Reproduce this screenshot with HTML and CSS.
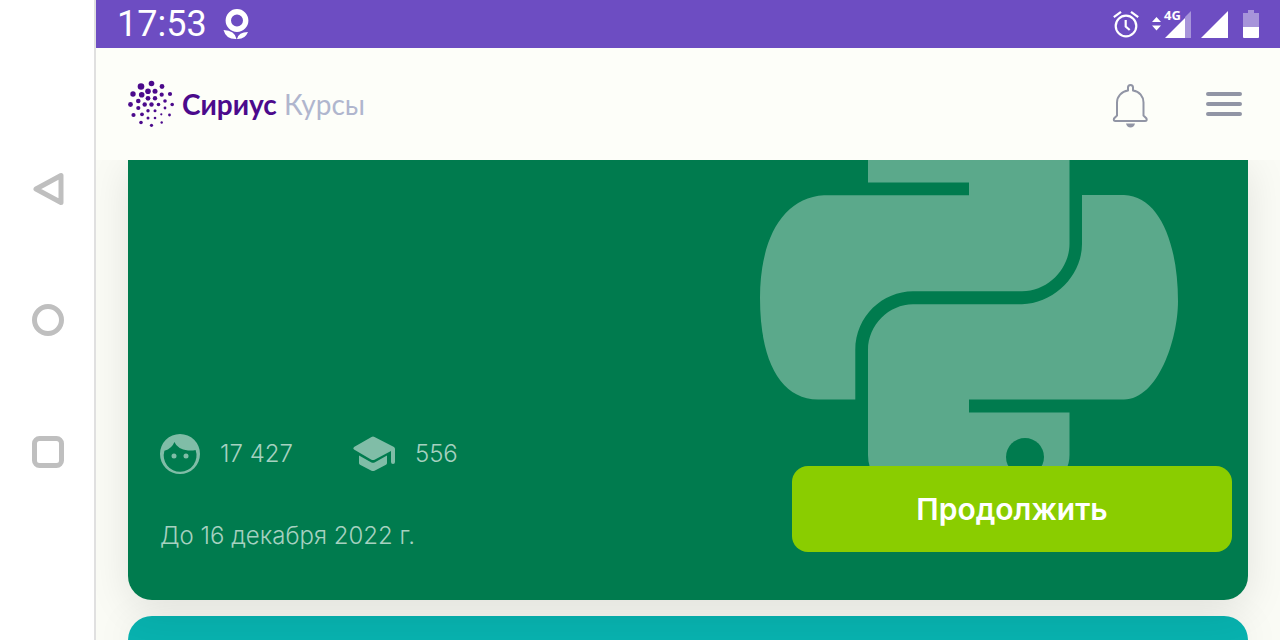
FILE: index.html
```html
<!DOCTYPE html>
<html lang="ru">
<head>
    <meta charset="UTF-8">
    <meta name="viewport" content="width=device-width, initial-scale=1.0">
    <title>Сириус Курсы</title>
    <link rel="stylesheet" href="styles.css">
</head>
<body>
    <!-- системная навигация -->
    <nav class="system-nav">
        <button type="button" aria-label="Назад">
            <svg width="32" height="32" viewBox="0 -1 32 32"><path d="M29 2.500v27L4 16Z" stroke-linejoin="round"/></svg>
        </button>
        <button type="button" aria-label="Домой">
            <svg width="32" height="32" viewBox="0 0 32 32"><circle cx="16" cy="16" r="13.5"/></svg>
        </button>
        <button type="button" aria-label="Недавние">
            <svg width="32" height="32" viewBox="0 0 32 32"><rect x="2.5" y="2.5" width="27" height="27" rx="5"/></svg>
        </button>
    </nav>

    <div class="screen">
        <div class="status-bar">
            <div class="status-left">
                <span class="clock">17:53</span>
                <svg width="26" height="32" viewBox="0 0 26 32">
                    <circle cx="14" cy="12.5" r="8.7" fill="none" stroke="#fff" stroke-width="5.4"/>
                    <path d="M.5 22Q12 22.5 13.5 31Q3 31.5 .5 22ZM25 24Q15.5 24 14 31Q22 31.5 25 24Z" fill="#fff"/>
                </svg>
            </div>
            <div class="status-right">
                <svg width="28" height="28" viewBox="0 0 28 28" fill="none" stroke="#fff" stroke-width="2.2">
                    <circle cx="13" cy="16" r="10.3"/>
                    <path d="M12.7 10v6.5l4 3.5M.8 7.2 8 1.8M25.2 7.2 18 1.8"/>
                </svg>
                <svg class="mobile" width="40" height="30" viewBox="0 0 40 30" fill="#fff">
                    <path d="M1 13 5.500 8 10 13ZM1 16.500l4.500 5L10 16.500Z"/>
                    <path d="M40 2v27H34V8Z" opacity=".4"/>
                    <path d="M34 9V29H14Z"/>
                    <text x="13" y="11">4G</text>
                </svg>
                <svg class="signal" width="27" height="28" viewBox="0 0 27 28"><path d="M27 1v27H0Z" fill="#fff"/></svg>
                <svg width="16" height="28" viewBox="0 0 16 28" fill="#fff">
                    <path d="M0 3h5V0h6v3h5V17H0Z" opacity=".4"/>
                    <path d="M0 17h16v10q0 1-1 1H1q-1 0-1-1Z"/>
                </svg>
            </div>
        </div>

        <header class="header">
            <a href="#" class="logo">
                <svg width="46" height="48" viewBox="0 0 46 48" fill="#4b0a8c">
                    <circle cx="23.5" cy="3.5" r="2.8"/><circle cx="13" cy="6.5" r="3.3"/><circle cx="34" cy="6.5" r="2.4"/>
                    <circle cx="5" cy="14" r="2.7"/><circle cx="20" cy="11.3" r="2.8"/><circle cx="27" cy="11.3" r="2.5"/>
                    <circle cx="13.7" cy="14.7" r="2.8"/><circle cx="33.7" cy="14.7" r="2.1"/><circle cx="42" cy="14" r="2.1"/>
                    <circle cx="20" cy="18.3" r="2.4"/><circle cx="27" cy="18.3" r="2.2"/><circle cx="10.3" cy="21" r="2.3"/>
                    <circle cx="37" cy="21" r="1.8"/><circle cx="2.5" cy="24.5" r="2.4"/><circle cx="16.7" cy="24.5" r="2.2"/>
                    <circle cx="23.5" cy="24.5" r="2.2"/><circle cx="30.5" cy="24.5" r="1.8"/><circle cx="44.2" cy="24.5" r="1.8"/>
                    <circle cx="10.3" cy="28" r="2.1"/><circle cx="37" cy="28" r="1.4"/><circle cx="20" cy="30.7" r="1.7"/>
                    <circle cx="27" cy="30.7" r="1.5"/><circle cx="5.5" cy="35" r="2.1"/><circle cx="14" cy="34.3" r="1.9"/>
                    <circle cx="33.3" cy="34.3" r="1.1"/><circle cx="41.5" cy="35" r="1.4"/><circle cx="20" cy="38" r="1.5"/>
                    <circle cx="27" cy="38" r="1.3"/><circle cx="13" cy="42.5" r="1.8"/><circle cx="33.7" cy="42.5" r="1.2"/>
                    <circle cx="23.5" cy="45.3" r="1.6"/>
                </svg>
                <span class="logo-text"><b>Сириус</b> Курсы</span>
            </a>
            <div class="header-actions">
                <button type="button" aria-label="Уведомления">
                    <svg width="36" height="44" viewBox="0 -1 36 44" fill="none" stroke="#9195a5" stroke-width="2" stroke-linejoin="round">
                        <path d="M16 7.5V4.5q0-2.500 2.500-2.500t2.500 2.500v3C27.500 8.500 31.500 13.500 31.500 19.500V32.500L34.500 35.500q.8 2.500-1.500 2.500H3.500q-2.300 0-1.500-2.500L5 32.500V19.5C5 13.500 9.500 8.500 16 7.5Z"/>
                        <path d="M14 40.500h9q-1 4-4.500 4t-4.500-4Z" fill="#9195a5" stroke="none"/>
                    </svg>
                </button>
                <button type="button" aria-label="Меню">
                    <svg width="36" height="24" viewBox="0 0 36 24" stroke="#9195a5" stroke-width="4" stroke-linecap="round">
                        <path d="M2 2h32M2 12h32M2 22h32"/>
                    </svg>
                </button>
            </div>
        </header>

        <main class="courses">
            <article class="card card-python">
                <svg class="card-image" width="418" height="346" viewBox="0 0 418 346" fill="#5ba98b">
                    <path d="M108 0V22.5H209V35.3H64C22 38 0 80 0 138C0 200 20 239 58 239.5H95.3V190C95.3 156 123 131.3 153 131.3H262C289 131 309.5 108 309.5 84V0Z"/>
                    <path d="M322 35H364C400 36 418 85 418 141C418 180 398 239 364 239.5H209V252.5H309.5V295C309.5 326 270 345 209 345C148 345 108 330 108 295V190C108 165 129 144.3 153 144.3H262C295 143 322 115 322 84Z"/>
                    <circle cx="265" cy="297" r="19" fill="#007b4e"/>
                </svg>
                <div class="card-info">
                    <div class="stats">
                        <span class="stat">
                            <svg width="40" height="40" viewBox="2 2 20 20" fill="#80bda7">
                                <path fill-rule="evenodd" d="M12 2a10 10 0 1 0 0 20a10 10 0 1 0 0-20ZM9.2 6Q10.7 9.6 16 10.2Q18 10.4 19.8 10A8.2 8.2 0 1 1 4.2 10.4Q8 9.3 9.2 6Z"/>
                                <circle cx="9" cy="13" r="1.25"/><circle cx="15" cy="13" r="1.25"/>
                            </svg>
                            17 427
                        </span>
                        <span class="stat">
                            <svg width="42" height="36" viewBox="0 0 42 36" fill="#80bda7">
                                <path d="M18.5 1Q20 0 21.5 1L41 11Q42 12 42 13V26q0 2-2 2t-2-2V15L22 23.5Q20 24.5 18 23.5L1 13.5Q-.5 12.5 1 11Z"/>
                                <path d="M6 19.5 18 26.2Q20 27.2 22 26.2L34 19.5V27Q34 28 33 28.7L22 34.5Q20 35.5 18 34.5L7 28.7Q6 28 6 27Z"/>
                            </svg>
                            556
                        </span>
                    </div>
                    <p class="deadline">До 16 декабря 2022 г.</p>
                </div>
                <button type="button" class="continue-btn">Продолжить</button>
            </article>
            <article class="card card-next"></article>
        </main>
    </div>
</body>
</html>
```
FILE: styles.css
```css
* {
    margin: 0;
    padding: 0;
    box-sizing: border-box;
}

body {
    display: flex;
    height: 100vh;
    overflow: hidden;
    font-family: Inter, "Noto Sans", sans-serif;
    background: #fafbf5;
}

button {
    border: none;
    background: none;
    font-family: inherit;
    cursor: pointer;
}

svg {
    display: block;
    flex-shrink: 0;
    overflow: visible;
}

/* системная навигация */
.system-nav {
    display: flex;
    flex-direction: column;
    align-items: center;
    justify-content: center;
    gap: 100px;
    flex: 0 0 96px;
    padding-left: 2px;
    background: #fff;
    border-right: 2px solid #e0e0e0;
}

.system-nav svg {
    fill: none;
    stroke: #bfbfbf;
    stroke-width: 5;
}

.screen {
    display: flex;
    flex-direction: column;
    flex: 1;
    min-width: 0;
}

.status-bar {
    display: flex;
    align-items: center;
    justify-content: space-between;
    flex: 0 0 48px;
    padding: 0 21px;
    background: #6d4dc2;
    color: #fff;
}

.status-left,
.status-right {
    display: flex;
    align-items: center;
}

.status-left {
    gap: 16px;
}

.status-right {
    gap: 10px;
}

.clock {
    font: 36px/48px Roboto, sans-serif;
}

.signal {
    margin-right: 5px;
}

.mobile text {
    font: bold 13px "Noto Sans", sans-serif;
}

/* шапка */
.header {
    display: flex;
    align-items: center;
    justify-content: space-between;
    flex: 0 0 112px;
    padding: 0 38px 0 32px;
    background: #fdfef9;
}

.logo {
    display: flex;
    align-items: center;
    gap: 8px;
    color: #b0b6ce;
    text-decoration: none;
}

.logo-text {
    font-family: Lato, Inter, sans-serif;
    font-size: 28px;
    line-height: 32px;
}

.logo-text b {
    font-weight: 700;
    color: #4b0a8c;
}

.header-actions {
    display: flex;
    align-items: center;
    gap: 58px;
}

/* карточки курсов */
.courses {
    display: flex;
    flex-direction: column;
    gap: 16px;
    flex: 1;
    min-height: 0;
    padding: 0 32px;
    overflow: hidden;
}

.card {
    box-shadow: 0 8px 40px rgba(0, 0, 0, 0.1);
}

.card-python {
    position: relative;
    display: flex;
    align-items: flex-end;
    justify-content: space-between;
    flex: 0 0 auto;
    min-height: 440px;
    padding: 48px 16px 48px 32px;
    border-radius: 0 0 24px 24px;
    background: #007b4e;
    color: #a6d1c0;
}

.card-image {
    position: absolute;
    top: 0;
    right: 70px;
}

.card-info {
    position: relative;
    display: flex;
    flex-direction: column;
    gap: 46px;
    font-size: 24px;
    font-weight: 300;
    line-height: 32px;
}

.stats {
    display: flex;
    gap: 60px;
}

.stat {
    display: flex;
    align-items: center;
    gap: 20px;
    height: 40px;
}

.continue-btn {
    position: relative;
    width: 440px;
    padding: 23px;
    border-radius: 16px;
    background: #8acd00;
    color: #fff;
    font-size: 30px;
    font-weight: 600;
    line-height: 40px;
}

.card-next {
    flex: 1;
    border-radius: 24px 24px 0 0;
    background: #08b1ae;
}
```
